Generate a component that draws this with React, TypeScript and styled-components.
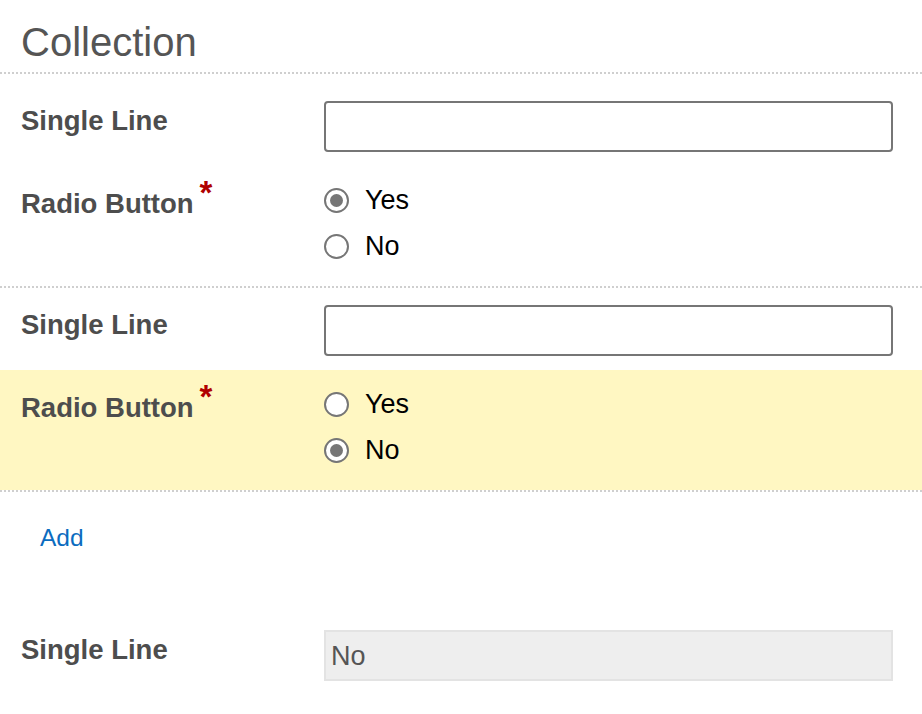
import React from "react";
import styled, { createGlobalStyle } from "styled-components";

const Global = createGlobalStyle`
  html, body { margin: 0; padding: 0; background: #ffffff; }
  body { font-family: "Liberation Sans", Arial, sans-serif; }
  * { box-sizing: border-box; }
`;

const Page = styled.div`
  width: 922px;
  min-height: 714px;
  background: #fff;
`;

const Heading = styled.h1`
  margin: 0;
  height: 74px;
  padding: 19px 0 0 21px;
  font-size: 40px;
  line-height: 46px;
  font-weight: 400;
  color: #555555;
  border-bottom: 2px dotted #cfcfcf;
`;

const Group = styled.div<{ $first?: boolean }>`
  padding-top: ${(p) => (p.$first ? 27 : 17)}px;
  border-bottom: 2px dotted #cfcfcf;
`;

const Row = styled.div<{ $highlight?: boolean; $radio?: boolean }>`
  display: grid;
  grid-template-columns: 303px 1fr;
  align-items: start;
  padding: ${(p) => (p.$radio ? "11px 29px 17px 21px" : "0 29px 0 21px")};
  margin-bottom: ${(p) => (p.$radio ? 0 : 14)}px;
  background: ${(p) => (p.$highlight ? "#fff7c2" : "transparent")};
`;

const Label = styled.div<{ $tall?: boolean }>`
  font-size: 27.5px;
  font-weight: 700;
  color: #4d4d4d;
  line-height: ${(p) => (p.$tall ? 46 : 33)}px;
  padding-top: ${(p) => (p.$tall ? 2 : 3)}px;
  white-space: nowrap;
`;

const Required = styled.span`
  color: #b00000;
  font-size: 33px;
  font-weight: 700;
  position: relative;
  top: -9px;
  margin-left: 6px;
`;

const TextInput = styled.input`
  display: block;
  width: 569px;
  height: 51px;
  border: 2px solid #767676;
  border-radius: 4px;
  background: #fff;
  font: 27px "Liberation Sans", Arial, sans-serif;
  padding: 0 6px;
  outline: none;
`;

const ReadOnlyBox = styled.div`
  width: 569px;
  height: 51px;
  border: 2px solid #e3e3e3;
  background: #eeeeee;
  color: #555555;
  font-size: 27px;
  line-height: 49px;
  padding: 0 5px;
`;

const Options = styled.div`
  display: flex;
  flex-direction: column;
`;

const Option = styled.label`
  display: flex;
  align-items: center;
  height: 46px;
  font-size: 27px;
  color: #000;
  gap: 16px;
  cursor: pointer;
`;

const RadioCircle = styled.span<{ $checked?: boolean }>`
  width: 25px;
  height: 25px;
  border-radius: 50%;
  border: 2px solid #767676;
  background: #fff;
  display: flex;
  align-items: center;
  justify-content: center;
  flex: none;
  &::after {
    content: "";
    width: 13px;
    height: 13px;
    border-radius: 50%;
    background: ${(p) => (p.$checked ? "#767676" : "transparent")};
  }
`;

const AddArea = styled.div`
  padding: 29px 0 0 40px;
  height: 138px;
`;

const AddLink = styled.a`
  font-size: 24.5px;
  line-height: 33px;
  color: #0b6cbf;
  text-decoration: none;
  cursor: pointer;
`;

type Item = { value: "Yes" | "No"; highlight?: boolean };

const items: Item[] = [{ value: "Yes" }, { value: "No", highlight: true }];

export default function App() {
  return (
    <Page>
      <Global />
      <Heading>Collection</Heading>
      {items.map((item, i) => (
        <Group key={i} $first={i === 0}>
          <Row>
            <Label>Single Line</Label>
            <TextInput type="text" />
          </Row>
          <Row $radio $highlight={item.highlight}>
            <Label $tall>
              Radio Button<Required>*</Required>
            </Label>
            <Options>
              {(["Yes", "No"] as const).map((opt) => (
                <Option key={opt}>
                  <RadioCircle $checked={item.value === opt} />
                  {opt}
                </Option>
              ))}
            </Options>
          </Row>
        </Group>
      ))}
      <AddArea>
        <AddLink>Add</AddLink>
      </AddArea>
      <Row>
        <Label>Single Line</Label>
        <ReadOnlyBox>No</ReadOnlyBox>
      </Row>
    </Page>
  );
}
